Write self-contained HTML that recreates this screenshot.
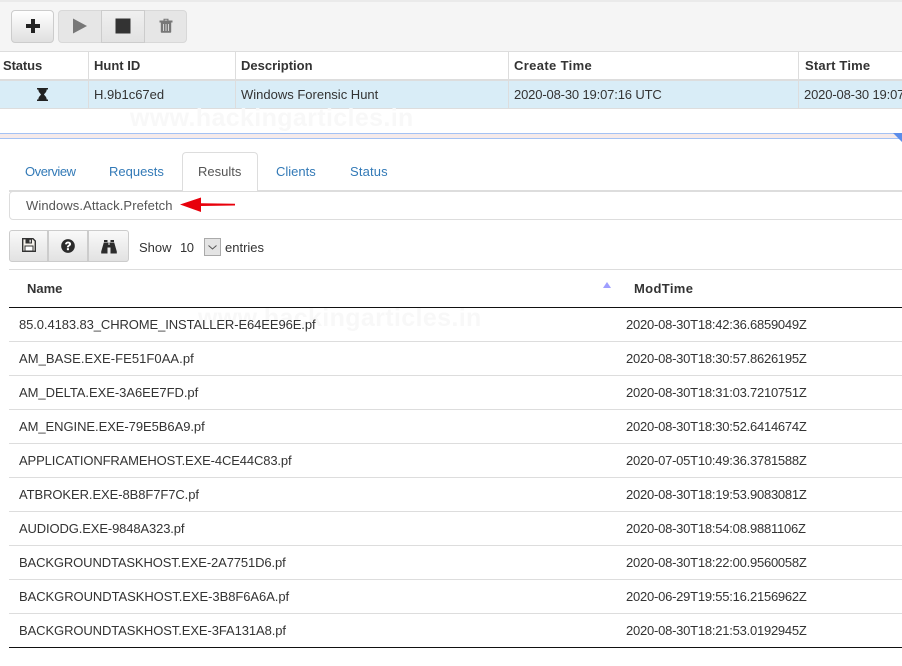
<!DOCTYPE html>
<html><head><meta charset="utf-8">
<style>
html,body{margin:0;padding:0;background:#fff;}
#p{position:relative;width:902px;height:666px;overflow:hidden;background:#fff;font-family:"Liberation Sans",sans-serif;font-size:13px;color:#333;}
#p div{position:absolute;}
.t{white-space:nowrap;line-height:18px;}
.d{letter-spacing:-.235px;left:626px;}
.n{left:19px;}
.b{font-weight:bold;}
.btn{box-sizing:border-box;border:1px solid #ccc;background:linear-gradient(#fff,#e0e0e0);}
.line{left:9px;width:893px;height:1px;background:#ddd;}
svg{position:absolute;display:block;}
</style></head><body>
<div id="p">
<div style="left:0;top:0;width:902px;height:51px;background:#f5f5f5;border-bottom:1px solid #ddd;"></div>
<div style="left:0;top:0;width:902px;height:2px;background:#eaeaea;"></div>

<div class="btn" style="left:11px;top:10px;width:43px;height:33px;border-radius:4px;"></div>
<svg style="left:26px;top:19px" width="14" height="14" viewBox="0 0 14 14"><path d="M5 0h4v5h5v4H9v5H5V9H0V5h5z" fill="#222"/></svg>

<div style="left:58px;top:10px;width:129px;height:33px;box-sizing:border-box;border:1px solid #d8d8d8;border-radius:4px;background:#e6e6e6;"></div>
<div class="btn" style="left:101px;top:10px;width:44px;height:33px;background:linear-gradient(#f0f0f0,#e2e2e2);"></div>
<svg style="left:73px;top:18px" width="15" height="16" viewBox="0 0 15 16"><path d="M0 .5L14 8 0 15.500z" fill="#777"/></svg>
<svg style="left:115px;top:18px" width="16" height="16" viewBox="0 0 16 16"><rect x=".5" y=".5" width="15" height="15" fill="#333"/></svg>
<svg style="left:159px;top:18px" width="14" height="15" viewBox="0 0 14 15"><path d="M.5 2.500h13v2H.5zM4.500 2.500V.7h5v1.800h-1.200v-.8H5.700v.8zM1.800 4.500h10.400V14a.7.7 0 0 1-.7.7h-9a.7.7 0 0 1-.7-.7z" fill="#777"/><path d="M4.500 6v7M7 6v7M9.500 6v7" stroke="#d4d4d4" stroke-width="1"/></svg>

<div style="left:0;top:79px;width:902px;height:2px;background:#ddd;"></div>
<div style="left:0;top:81px;width:902px;height:27px;background:#d9edf7;"></div>
<div style="left:0;top:108px;width:902px;height:1px;background:#ddd;"></div>
<div style="left:88px;top:52px;width:1px;height:56px;background:#ddd;"></div>
<div style="left:235px;top:52px;width:1px;height:56px;background:#ddd;"></div>
<div style="left:508px;top:52px;width:1px;height:56px;background:#ddd;"></div>
<div style="left:798px;top:52px;width:1px;height:56px;background:#ddd;"></div>

<div class="t b" style="left:3px;top:57px;letter-spacing:-.1px;">Status</div>
<div class="t b" style="left:94px;top:57px;">Hunt ID</div>
<div class="t b" style="left:241px;top:57px;">Description</div>
<div class="t b" style="left:514px;top:57px;letter-spacing:.36px;">Create Time</div>
<div class="t b" style="left:805px;top:57px;letter-spacing:.2px;">Start Time</div>
<svg style="left:37px;top:88px" width="11" height="13" viewBox="0 0 11 13"><path d="M0 0h11v1.500H9.700C9.700 4 7.800 5.200 7 6.500c.8 1.300 2.700 2.500 2.700 5H11V13H0v-1.500h1.300c0-2.500 1.900-3.700 2.700-5C3.200 5.200 1.300 4 1.300 1.500H0z" fill="#222"/></svg>
<div class="t" style="left:94px;top:86px;">H.9b1c67ed</div>
<div class="t" style="left:241px;top:86px;">Windows Forensic Hunt</div>
<div class="t" style="left:514px;top:86px;letter-spacing:-.15px;">2020-08-30 19:07:16 UTC</div>
<div class="t" style="left:804px;top:86px;letter-spacing:-.15px;">2020-08-30 19:07:16 UTC</div>

<div class="t b" style="left:130px;top:103px;font-size:25px;line-height:30px;color:#f8f8f8;letter-spacing:.37px;">www.hackingarticles.in</div>

<div style="left:0;top:133px;width:902px;height:6px;box-sizing:border-box;border-top:1px solid #a4c2f4;border-bottom:1px solid #a4c2f4;background:#f5eaea;"></div>
<svg style="left:893px;top:133px" width="9" height="9" viewBox="0 0 9 9"><path d="M0 0h9v9z" fill="#5b8dea"/></svg>

<div style="left:9px;top:190px;width:893px;height:2px;background:#ddd;"></div>
<div style="left:182px;top:152px;width:76px;height:40px;box-sizing:border-box;border:1px solid #ddd;border-bottom:none;border-radius:4px 4px 0 0;background:#fff;"></div>
<div class="t" style="left:25px;top:163px;color:#337ab7;letter-spacing:-.45px;">Overview</div>
<div class="t" style="left:109px;top:163px;color:#337ab7;">Requests</div>
<div class="t" style="left:198px;top:163px;color:#555;">Results</div>
<div class="t" style="left:276px;top:163px;color:#337ab7;">Clients</div>
<div class="t" style="left:350px;top:163px;color:#337ab7;letter-spacing:.15px;">Status</div>

<div style="left:9px;top:191px;width:900px;height:29px;box-sizing:border-box;border:1px solid #ddd;border-radius:4px;background:#fff;"></div>
<div class="t" style="left:26px;top:197px;color:#555;letter-spacing:.09px;">Windows.Attack.Prefetch</div>
<svg style="left:178px;top:195px" width="60" height="20" viewBox="0 0 60 20"><path d="M2 9.500L23 2.500V8.300L57 8.800V10.500L23 11V17z" fill="#e8000b"/></svg>

<div class="btn" style="left:9px;top:230px;width:39px;height:32px;border-radius:3px 0 0 3px;background:linear-gradient(#f9f9f9,#e2e2e2);"></div>
<div class="btn" style="left:48px;top:230px;width:40px;height:32px;background:linear-gradient(#f9f9f9,#e2e2e2);"></div>
<div class="btn" style="left:88px;top:230px;width:41px;height:32px;border-radius:0 3px 3px 0;background:linear-gradient(#f9f9f9,#e2e2e2);"></div>
<svg style="left:22px;top:238px" width="14" height="14" viewBox="0 0 14 14"><path d="M.7.700h10.300l2.300 2.300v10.300H.7z" fill="#f4f0ea" stroke="#333" stroke-width="1.400"/><path d="M3.500 1h6.500v4.500H3.500z" fill="#333"/><path d="M7.500 1.800h1.300v2.700H7.500z" fill="#eee"/><path d="M3 8h8v5H3z" fill="#fff" stroke="#333"/></svg>
<svg style="left:61px;top:239px" width="14" height="14" viewBox="0 0 15 15"><circle cx="7.500" cy="7.500" r="7.300" fill="#2b2b2b"/><path d="M4.300 5.600C4.500 3.700 6 2.800 7.600 2.800c1.900 0 3.200 1 3.200 2.600 0 2.200-2.300 2.100-2.300 3.600H6.300c0-2.400 2.200-2.400 2.200-3.500 0-.5-.4-.8-1-.8s-1 .4-1.100 1.100z" fill="#fff"/><rect x="6.300" y="9.800" width="2.200" height="2.200" fill="#fff"/></svg>
<svg style="left:101px;top:240px" width="16" height="14" viewBox="0 0 16 14"><path d="M3 0h3.500v2H3zM9.500 0H13v2H9.500zM2.800 2.500h4.700V5h1V2.500h4.700l2.600 9v2H9.500V7.500h-3v6H.2v-2z" fill="#2b2b2b"/></svg>

<div class="t" style="left:139px;top:239px;">Show</div>
<div class="t" style="left:180px;top:239px;letter-spacing:-.5px;">10</div>
<div style="left:204px;top:238px;width:17px;height:18px;box-sizing:border-box;border:1px solid #aaa;background:#e4e4e4;"></div>
<svg style="left:208px;top:245px" width="9" height="5" viewBox="0 0 9 5"><path d="M.5.500l4 3.500 4-3.500" fill="none" stroke="#555"/></svg>
<div class="t" style="left:225px;top:239px;">entries</div>

<div class="line" style="top:269px;"></div>
<div class="t b" style="left:27px;top:280px;">Name</div>
<svg style="left:603px;top:282px" width="8" height="6" viewBox="0 0 8 6"><path d="M4 0l4 6H0z" fill="#9e9eff"/></svg>
<div class="t b" style="left:634px;top:280px;letter-spacing:.35px;">ModTime</div>
<div class="line" style="top:307px;background:#111;"></div>

<div class="t b" style="left:198px;top:303px;font-size:25px;line-height:30px;color:#f8f8f8;letter-spacing:.37px;">www.hackingarticles.in</div>

<div class="t n" style="top:316px;letter-spacing:-.095px;">85.0.4183.83_CHROME_INSTALLER-E64EE96E.pf</div>
<div class="t d" style="top:316px;">2020-08-30T18:42:36.6859049Z</div>
<div class="line" style="top:341px;"></div>
<div class="t n" style="top:350px;letter-spacing:.06px;">AM_BASE.EXE-FE51F0AA.pf</div>
<div class="t d" style="top:350px;">2020-08-30T18:30:57.8626195Z</div>
<div class="line" style="top:375px;"></div>
<div class="t n" style="top:384px;letter-spacing:-.04px;">AM_DELTA.EXE-3A6EE7FD.pf</div>
<div class="t d" style="top:384px;">2020-08-30T18:31:03.7210751Z</div>
<div class="line" style="top:409px;"></div>
<div class="t n" style="top:418px;letter-spacing:-.06px;">AM_ENGINE.EXE-79E5B6A9.pf</div>
<div class="t d" style="top:418px;">2020-08-30T18:30:52.6414674Z</div>
<div class="line" style="top:443px;"></div>
<div class="t n" style="top:452px;letter-spacing:-.13px;">APPLICATIONFRAMEHOST.EXE-4CE44C83.pf</div>
<div class="t d" style="top:452px;">2020-07-05T10:49:36.3781588Z</div>
<div class="line" style="top:477px;"></div>
<div class="t n" style="top:486px;letter-spacing:-.08px;">ATBROKER.EXE-8B8F7F7C.pf</div>
<div class="t d" style="top:486px;">2020-08-30T18:19:53.9083081Z</div>
<div class="line" style="top:511px;"></div>
<div class="t n" style="top:520px;letter-spacing:-.13px;">AUDIODG.EXE-9848A323.pf</div>
<div class="t d" style="top:520px;">2020-08-30T18:54:08.9881106Z</div>
<div class="line" style="top:545px;"></div>
<div class="t n" style="top:554px;letter-spacing:-.12px;">BACKGROUNDTASKHOST.EXE-2A7751D6.pf</div>
<div class="t d" style="top:554px;">2020-08-30T18:22:00.9560058Z</div>
<div class="line" style="top:579px;"></div>
<div class="t n" style="top:588px;letter-spacing:-.06px;">BACKGROUNDTASKHOST.EXE-3B8F6A6A.pf</div>
<div class="t d" style="top:588px;">2020-06-29T19:55:16.2156962Z</div>
<div class="line" style="top:613px;"></div>
<div class="t n" style="top:622px;letter-spacing:-.09px;">BACKGROUNDTASKHOST.EXE-3FA131A8.pf</div>
<div class="t d" style="top:622px;">2020-08-30T18:21:53.0192945Z</div>
<div class="line" style="top:647px;background:#111;"></div>
</div>
</body></html>
